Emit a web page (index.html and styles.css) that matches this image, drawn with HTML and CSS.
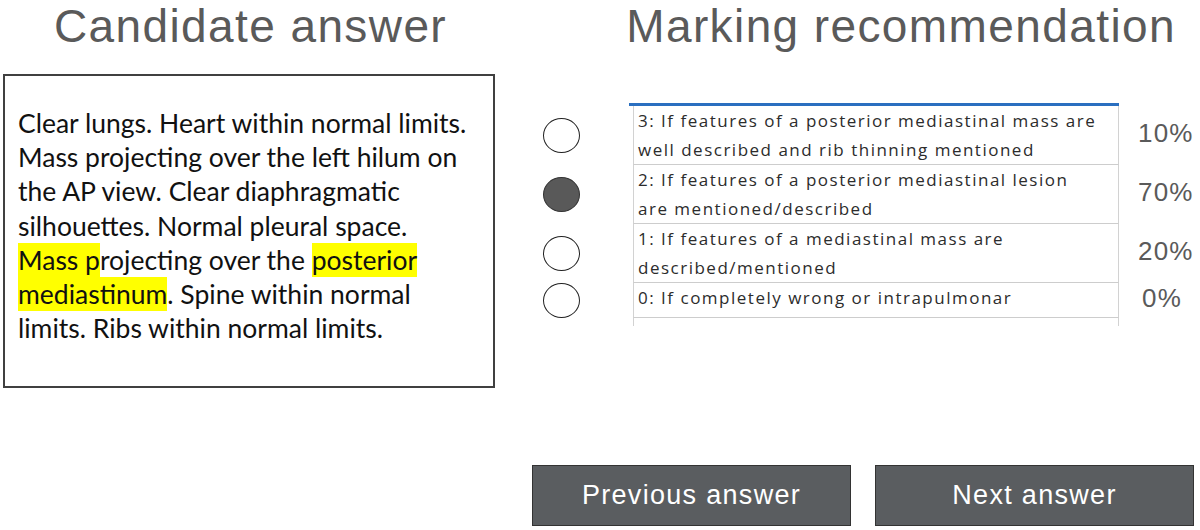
FILE: index.html
```html
<!DOCTYPE html>
<html lang="en">
<head>
    <meta charset="UTF-8">
    <meta name="viewport" content="width=device-width, initial-scale=1.0">
    <title>Marking - Candidate answer</title>
    <link rel="stylesheet" href="styles.css">
</head>
<body>
    <div class="page">
        <section class="answer-col">
            <h1 class="heading">Candidate answer</h1>
            <div class="answer-box">
                <p class="answer-text">Clear lungs. Heart within normal limits.<br>Mass projecting over the left hilum on<br>the AP view. Clear diaphragmatic<br>silhouettes. Normal pleural space.<br><mark>Mass p</mark>rojecting over the <mark>posterior</mark><br><mark>mediastinum</mark>. Spine within normal<br>limits. Ribs within normal limits.</p>
            </div>
        </section>

        <section class="marking-col">
            <h1 class="heading heading-right">Marking recommendation</h1>

            <div class="marks">
                <!-- blue header line of the sheet -->
                <div></div><div class="sheet-top"></div><div></div>

                <div class="radio"></div>
                <div class="desc">3: If features of a posterior mediastinal mass are<br>well described and rib thinning mentioned</div>
                <div class="pct">10%</div>

                <div class="radio checked"></div>
                <div class="desc">2: If features of a posterior mediastinal lesion<br>are mentioned/described</div>
                <div class="pct">70%</div>

                <div class="radio"></div>
                <div class="desc">1: If features of a mediastinal mass are<br>described/mentioned</div>
                <div class="pct">20%</div>

                <div class="radio"></div>
                <div class="desc">0: If completely wrong or intrapulmonar</div>
                <div class="pct pct-single">0%</div>

                <div></div><div class="desc-stub"></div><div></div>
            </div>

            <div class="nav">
                <button class="nav-btn">Previous answer</button>
                <button class="nav-btn">Next answer</button>
            </div>
        </section>
    </div>
</body>
</html>
```

FILE: styles.css
```css
html, body {
    margin: 0;
    padding: 0;
    background-color: #fff;
}
.page {
    display: flex;
    width: 1200px;
    height: 530px;
}
.heading {
    margin: 0;
    font-family: "Liberation Sans", Arial, sans-serif;
    font-weight: 400;
    font-size: 46px;
    line-height: 52px;
    letter-spacing: 1.4px;
    color: #5a5a5a;
}

/* left side: the answer being marked */
.answer-col {
    width: 498px;
    padding-left: 3px;
    box-sizing: border-box;
    display: flex;
    flex-direction: column;
}
.answer-col .heading {
    text-align: center;
}
.answer-box {
    margin-top: 22px;
    width: 492px;
    height: 314px;
    box-sizing: border-box;
    border: 2px solid #404040;
    padding: 30px 0 0 13px;
}
.answer-text {
    margin: 0;
    font-family: Lato, sans-serif;
    font-size: 26.5px;
    line-height: 34.2px;
    color: #111;
    white-space: nowrap;
}
mark {
    background-color: #ffff00;
    color: inherit;
    padding: 1px 0;
}

/* right side: score options */
.marking-col {
    flex: 1;
    display: flex;
    flex-direction: column;
}
.heading-right {
    text-align: right;
    padding-right: 24px;
}
.marks {
    margin-top: 51px;
    margin-left: 45px;
    display: grid;
    grid-template-columns: 90px 486px auto;
    align-items: center;
}
.sheet-top {
    height: 3px;
    margin-left: -4px;
    background-color: #2a6fc0;
}
.radio {
    width: 37px;
    height: 35px;
    box-sizing: border-box;
    border: 1.6px solid #222;
    border-radius: 50%;
    background-color: #fff;
}
.radio.checked {
    background-color: #595959;
    border-color: #333;
}
.desc {
    align-self: stretch;
    padding-left: 4px;
    border-left: 1px solid #d2d2d2;
    border-right: 1px solid #d2d2d2;
    border-bottom: 1px solid #cdcdcd;
    font-family: "Open Sans", sans-serif;
    font-size: 17px;
    line-height: 29px;
    letter-spacing: 1.5px;
    color: #2c2c2c;
    white-space: nowrap;
    overflow: hidden;
}
.desc-stub {
    height: 8px;
    border-left: 1px solid #d2d2d2;
    border-right: 1px solid #d2d2d2;
}
.pct {
    padding-left: 19px;
    margin-top: -4px;
    font-family: "Liberation Sans", Arial, sans-serif;
    font-size: 26px;
    letter-spacing: 1.2px;
    color: #5a5a5a;
}
.pct-single {
    padding-left: 23px;
}

.nav {
    margin-top: auto;
    margin-bottom: 4px;
    margin-left: 34px;
    display: flex;
    gap: 24px;
}
.nav-btn {
    width: 319px;
    height: 61px;
    background-color: #5a5d60;
    border: 1.5px solid #333;
    color: #fff;
    font-family: "Liberation Sans", Arial, sans-serif;
    font-size: 27px;
    letter-spacing: 1.3px;
    cursor: pointer;
}
```
